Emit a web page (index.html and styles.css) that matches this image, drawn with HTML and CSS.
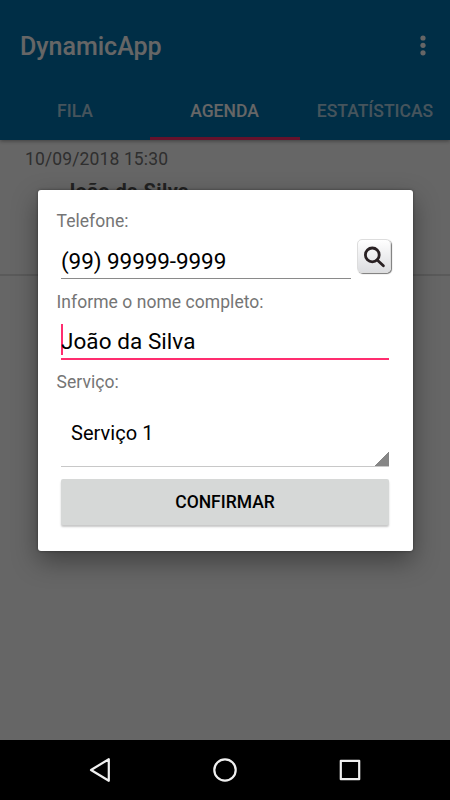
FILE: index.html
```html
<!DOCTYPE html>
<html lang="pt-BR">
<head>
  <meta charset="UTF-8" />
  <title>DynamicApp</title>
  <meta name="viewport" content="width=device-width, initial-scale=1.0" />
  <link rel="stylesheet" href="styles.css">
</head>
<body>

  <div class="screen">
    <header class="app-header">
      <div class="toolbar">
        <h1 class="app-title">DynamicApp</h1>
        <button class="menu-btn" aria-label="Mais opções">
          <svg width="6" height="22" viewBox="0 0 6 22">
            <circle cx="3" cy="3" r="2.6" />
            <circle cx="3" cy="10.3" r="2.6" />
            <circle cx="3" cy="17.8" r="2.6" />
          </svg>
        </button>
      </div>
      <nav class="tabs">
        <a class="tab">FILA</a>
        <a class="tab active">AGENDA</a>
        <a class="tab">ESTATÍSTICAS</a>
      </nav>
    </header>

    <main class="agenda">
      <div class="agenda-item">
        <div class="agenda-date">10/09/2018 15:30</div>
        <div class="agenda-name">João da Silva</div>
      </div>
    </main>

    <!-- Dialog -->
    <div class="backdrop">
      <form class="dialog" role="dialog" aria-modal="true">
        <div class="label">Telefone:</div>
        <div class="phone-row">
          <div class="field phone">(99) 99999-9999</div>
          <button type="button" class="search-btn" aria-label="Buscar">
            <svg width="24" height="24" viewBox="0 0 24 24">
              <circle cx="9.3" cy="8.9" r="6.9" />
              <path d="M14.2 13.9 L20.4 19.7" />
            </svg>
          </button>
        </div>
        <div class="label label-name">Informe o nome completo:</div>
        <div class="field name"><span class="caret"></span>João da Silva</div>
        <div class="label label-service">Serviço:</div>
        <div class="spinner">Serviço 1</div>
        <button type="button" class="confirm-btn">CONFIRMAR</button>
      </form>
    </div>
  </div>

  <!-- System navigation -->
  <footer class="system-nav">
    <svg width="30" height="30" viewBox="0 0 30 30"><path d="M23.8 4.2 V25.8 L6 15 Z" /></svg>
    <svg width="30" height="30" viewBox="0 0 30 30"><circle cx="15" cy="15" r="10.7" /></svg>
    <svg width="30" height="30" viewBox="0 0 30 30"><rect x="5.8" y="5.8" width="18.4" height="18.4" /></svg>
  </footer>

</body>
</html>
```

FILE: styles.css
```css
:root {
  --primary: #0073ae;
  --accent: #ff2d6f;
  --label: #757575;
}

* {
  box-sizing: border-box;
}

body {
  display: flex;
  flex-direction: column;
  height: 800px;
  margin: 0;
  font-family: Roboto, sans-serif;
  background: #000;
  overflow: hidden;
}

button {
  padding: 0;
  border: none;
  font-family: inherit;
}

.screen {
  position: relative;
  display: flex;
  flex-direction: column;
  height: 740px;
  background: #fff;
}

.app-header {
  height: 140px;
  background: var(--primary);
  color: #fff;
  box-shadow: 0 1px 4px rgba(0, 0, 0, 0.4);
  z-index: 1;
}

.toolbar {
  display: flex;
  align-items: center;
  justify-content: space-between;
  height: 80px;
  padding: 12px 24.5px 0 20px;
}

.app-title {
  margin: 0;
  font-size: 25px;
  font-weight: 500;
}

.menu-btn {
  height: 22px;
  background: none;
  fill: #fff;
}

.tabs {
  display: grid;
  grid-template-columns: repeat(3, 1fr);
  height: 60px;
}

.tab {
  display: flex;
  align-items: center;
  justify-content: center;
  padding-top: 4px;
  border-bottom: 3px solid transparent;
  font-size: 17.5px;
  font-weight: 500;
  color: rgba(255, 255, 255, 0.7);
}

.tab.active {
  padding-right: 1px;
  color: #fff;
  border-bottom-color: var(--accent);
}

.agenda-item {
  height: 136px;
  padding: 8px 25px;
  border-bottom: 2px solid #e0e0e0;
}

.agenda-date {
  font-size: 17.5px;
  line-height: 22px;
  letter-spacing: 0.13px;
  color: var(--label);
}

.agenda-name {
  padding: 9px 0 0 39px;
  font-size: 20px;
  line-height: 24px;
  font-weight: 700;
  letter-spacing: 0.4px;
  color: #555;
}

.backdrop {
  position: absolute;
  inset: 0;
  z-index: 2;
  display: flex;
  align-items: center;
  justify-content: center;
  background: rgba(0, 0, 0, 0.6);
}

.dialog {
  width: 375px;
  height: 361px;
  padding: 20px 19px;
  border-radius: 3px;
  background: #fff;
  box-shadow: 0 10px 26px rgba(0, 0, 0, 0.38), 0 0 3px rgba(0, 0, 0, 0.4);
}

.label {
  font-size: 17.5px;
  line-height: 22px;
  letter-spacing: 0.05px;
  color: var(--label);
}

.phone-row {
  display: flex;
  justify-content: space-between;
  padding: 5px 2.5px 0 4.5px;
}

.field {
  font-size: 22.5px;
  line-height: 28px;
  color: #000;
}

.field.phone {
  width: 289.5px;
  height: 42px;
  padding-top: 10px;
  border-bottom: 1px solid #8a8a8a;
  letter-spacing: -0.08px;
}

.search-btn {
  width: 34px;
  height: 34px;
  margin-top: 2px;
  border: 1px solid #ddd;
  border-radius: 5px;
  background: linear-gradient(#fff, #dcdde0);
  box-shadow: 1px 1px 1px #777;
}

.search-btn svg {
  display: block;
  margin: 4px 0 0 5px;
  fill: none;
  stroke: #292123;
  stroke-width: 2.8;
  stroke-linecap: round;
}

.label-name {
  padding-top: 12px;
  height: 34px;
}

.field.name {
  display: flex;
  height: 36px;
  margin: 11px 5px 0 4.5px;
  padding-top: 3px;
  border-bottom: 2px solid var(--accent);
  letter-spacing: 0.06px;
}

.caret {
  width: 2px;
  height: 31px;
  margin: -3px -2px 0 0;
  background: var(--accent);
}

.label-service {
  padding-top: 11px;
}

.spinner {
  height: 74px;
  margin: 0 5px 0 4.5px;
  padding: 28px 10px 0;
  border-bottom: 1px solid #c8c8c8;
  background: linear-gradient(135deg, transparent 50%, #868686 50%) right bottom / 15px 15px no-repeat;
  font-size: 20px;
  line-height: 24px;
  letter-spacing: 0.05px;
  color: #000;
}

.confirm-btn {
  display: block;
  width: 328px;
  height: 46px;
  margin: 12px 4.5px 0;
  padding-top: 1px;
  border-radius: 2px;
  background: #d6d8d7;
  box-shadow: 0 2px 2px rgba(0, 0, 0, 0.22);
  font-size: 17.5px;
  font-weight: 500;
  color: #000;
}

.system-nav {
  display: flex;
  align-items: center;
  justify-content: space-between;
  height: 60px;
  padding: 0 85px;
  background: #000;
}

.system-nav svg {
  fill: none;
  stroke: #f0f0f0;
  stroke-width: 2.2;
  stroke-linejoin: round;
}
```
